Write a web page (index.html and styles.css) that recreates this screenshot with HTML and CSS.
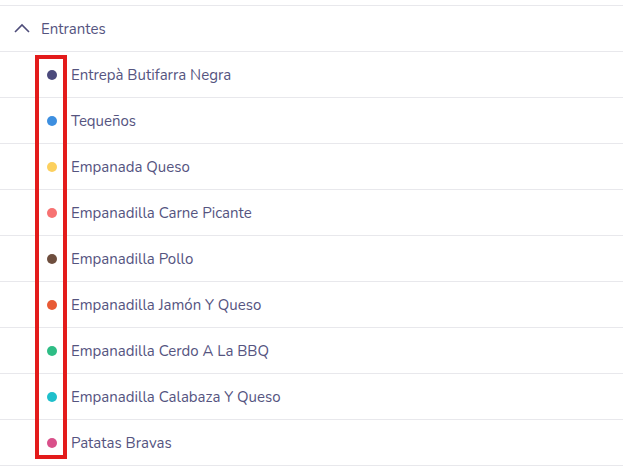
FILE: index.html
```html
<!DOCTYPE html>
<html lang="es">
<head>
    <meta charset="UTF-8">
    <meta name="viewport" content="width=device-width, initial-scale=1.0">
    <title>Entrantes</title>
    <link rel="stylesheet" href="styles.css">
</head>
<body>
    <div class="group">
        <div class="group-header">
            <svg class="chevron" width="16" height="10" viewBox="0 0 16 10">
                <path d="M1 9 L8 2 L15 9" fill="none" stroke="#4e4d7a" stroke-width="1.6"/>
            </svg>
            <span>Entrantes</span>
        </div>
        <ul class="items">
            <li><span class="dot dot-purple"></span>Entrepà Butifarra Negra</li>
            <li><span class="dot dot-blue"></span>Tequeños</li>
            <li><span class="dot dot-yellow"></span>Empanada Queso</li>
            <li><span class="dot dot-salmon"></span>Empanadilla Carne Picante</li>
            <li><span class="dot dot-brown"></span>Empanadilla Pollo</li>
            <li><span class="dot dot-orange"></span>Empanadilla Jamón Y Queso</li>
            <li><span class="dot dot-green"></span>Empanadilla Cerdo A La BBQ</li>
            <li><span class="dot dot-cyan"></span>Empanadilla Calabaza Y Queso</li>
            <li><span class="dot dot-pink"></span>Patatas Bravas</li>
        </ul>
        <div class="highlight"></div>
    </div>
</body>
</html>
```

FILE: styles.css
```css
:root {
    --text: #55547f;
    --line: #e8e8ec;
    --mark: #e31b1b;
}
body {
    margin: 0;
    padding-top: 5px;
    background: #fff;
    font-family: "Nunito", "Lato", "Noto Sans", sans-serif;
    font-size: 15px;
    color: var(--text);
}
.group {
    position: relative;
    border-top: 1px solid var(--line);
}
.group-header {
    height: 45px;
    display: flex;
    align-items: center;
    gap: 11px;
    padding-left: 14px;
    border-bottom: 1px solid var(--line);
}
.chevron {
    margin-top: -2px;
}
.items {
    list-style: none;
    margin: 0;
    padding: 0;
}
.items li {
    height: 45px;
    display: flex;
    align-items: center;
    padding-left: 47px;
    border-bottom: 1px solid var(--line);
}
.dot {
    width: 10px;
    height: 10px;
    border-radius: 50%;
    margin-right: 14px;
}
.dot-purple { background: #4b4a7c; }
.dot-blue { background: #3d8fe0; }
.dot-yellow { background: #fcd05e; }
.dot-salmon { background: #f77272; }
.dot-brown { background: #6e4e3e; }
.dot-orange { background: #e85a35; }
.dot-green { background: #2ebd85; }
.dot-cyan { background: #1fbfcb; }
.dot-pink { background: #d9508a; }
.highlight {
    position: absolute;
    left: 35px;
    top: 49px;
    width: 24px;
    height: 396px;
    border: 4px solid var(--mark);
}
```
